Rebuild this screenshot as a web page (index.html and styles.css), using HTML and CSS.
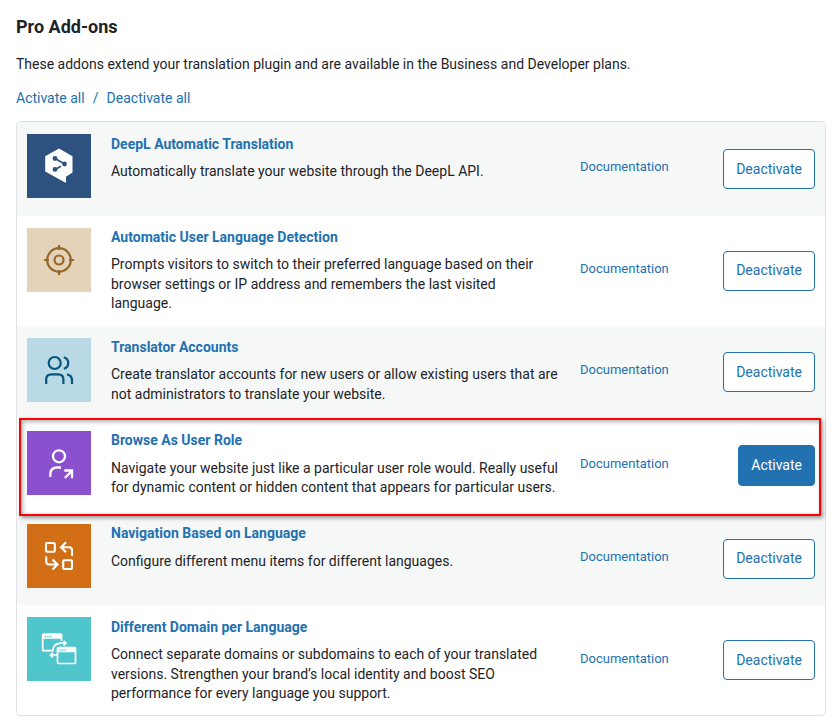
FILE: index.html
```html
<!DOCTYPE html>
<html lang="en">
<head>
<meta charset="utf-8">
<title>Pro Add-ons</title>
<link rel="stylesheet" href="styles.css">
</head>
<body>
<main class="page">
  <h2 class="heading">Pro Add-ons</h2>
  <p class="intro">These addons extend your translation plugin and are available in the Business and Developer plans.</p>
  <div class="bulk"><a>Activate all</a><span class="slash">/</span><a>Deactivate all</a></div>
  <section class="addons">
    <article class="row shaded">
      <svg class="icon deepl" viewBox="0 0 64 64"><path fill="#fff" d="M32 14.5 45.5 22.3V38.5L39 42.8V49L18.2 37.5V22.3Z"/><path d="M28 24.5 37.5 30M28 35.4 34 32.2" fill="none" stroke="#2d5280" stroke-width="1.7"/><g fill="#2d5280"><circle cx="28" cy="24.5" r="2.4"/><circle cx="37.5" cy="30" r="2.4"/><circle cx="28" cy="35.4" r="2.4"/></g></svg>
      <div class="info"><h3>DeepL Automatic Translation</h3><p>Automatically translate your website through the DeepL API.</p></div>
      <a class="doc">Documentation</a>
      <button class="btn">Deactivate</button>
    </article>
    <article class="row tall">
      <svg class="icon detect" viewBox="0 0 64 64"><g fill="none" stroke="#946728" stroke-width="2.2"><circle cx="32" cy="32" r="11.8"/><circle cx="32" cy="32" r="4.5"/><path d="M32 17v5M32 42v5M17 32h5M42 32h5"/></g></svg>
      <div class="info"><h3>Automatic User Language Detection</h3><p>Prompts visitors to switch to their preferred language based on their browser settings or IP address and remembers the last visited language.</p></div>
      <a class="doc">Documentation</a>
      <button class="btn">Deactivate</button>
    </article>
    <article class="row shaded">
      <svg class="icon accounts" viewBox="0 0 64 64"><g fill="none" stroke="#04567f" stroke-width="2.2"><circle cx="27.7" cy="25" r="6"/><path d="M19.2 46v-4.500q0-5.200 5.200-5.200h6.800q5.200 0 5.200 5.200V46M36.800 19.200a6 6 0 0 1 0 11.600M40 36.300q5 1 5 6V46"/></g></svg>
      <div class="info"><h3>Translator Accounts</h3><p>Create translator accounts for new users or allow existing users that are not administrators to translate your website.</p></div>
      <a class="doc">Documentation</a>
      <button class="btn">Deactivate</button>
    </article>
    <article class="row highlighted">
      <svg class="icon browse" viewBox="0 0 64 64"><g fill="none" stroke="#fff" stroke-width="2.3"><circle cx="32" cy="25.300" r="6"/><path d="M23.300 46v-2.500q0-7 7-7H34M37.800 47 45 39.800M37.300 39.500H45v7.700"/></g></svg>
      <div class="info"><h3>Browse As User Role</h3><p>Navigate your website just like a particular user role would. Really useful for dynamic content or hidden content that appears for particular users.</p></div>
      <a class="doc">Documentation</a>
      <button class="btn primary">Activate</button>
    </article>
    <article class="row shaded">
      <svg class="icon navigation" viewBox="0 0 64 64"><g fill="none" stroke="#fff" stroke-width="2.1"><rect x="19" y="19" width="8.800" height="8.800" rx="1"/><rect x="36.200" y="36.200" width="8.800" height="8.800" rx="1"/><path d="M39 18.300 34 23.300l5 5M34 23.300h8q3 0 3 3V32M19.200 32.500v5q0 3 3 3H30M25.500 35.500l5 5-5 5"/></g></svg>
      <div class="info"><h3>Navigation Based on Language</h3><p>Configure different menu items for different languages.</p></div>
      <a class="doc">Documentation</a>
      <button class="btn">Deactivate</button>
    </article>
    <article class="row tall">
      <svg class="icon domain" viewBox="0 0 64 64"><g fill="none" stroke="#fff" stroke-width="1.700"><path d="M34.500 24V18q0-1-1-1H16.700q-1 0-1 1v14.700q0 1 1 1H26q0-7.500 8.500-7.500H38M36.500 24l2.500 2.300-2.500 2.300M30 38H23.500M26 35.700 23.500 38l2.500 2.300"/><rect x="30.500" y="30.700" width="18" height="15.800" rx="1"/></g><path fill="#fff" d="M16 17h18v4.800H16zM31 31h17v4.300H31z"/><path stroke="#4fc5cc" stroke-width="1.200" stroke-dasharray="1.500 1" d="M17.500 19.600h6.500M32.500 33.200H39"/></svg>
      <div class="info"><h3>Different Domain per Language</h3><p>Connect separate domains or subdomains to each of your translated versions. Strengthen your brand’s local identity and boost SEO performance for every language you support.</p></div>
      <a class="doc">Documentation</a>
      <button class="btn">Deactivate</button>
    </article>
  </section>
</main>
</body>
</html>
```
FILE: styles.css
```css
* { box-sizing: border-box; }
body {
  margin: 0;
  background: #fff;
  color: #1d2327;
  font: 14px/19.6px Roboto, "Liberation Sans", sans-serif;
}
.page { padding: 16px 11px 0 16px; }
h2, h3, p { margin: 0; }
.heading { font-size: 18px; line-height: 22px; font-weight: 700; }
.intro { margin-top: 16px; line-height: 20px; }
.bulk { display: flex; gap: 8.1px; margin-top: 14px; line-height: 20px; color: #2271b1; }
.addons {
  margin-top: 13.4px;
  border: 1px solid #dfe1e2;
  border-radius: 5px;
  box-shadow: 0 1px 2px rgba(0, 0, 0, .05);
}
.row {
  position: relative;
  display: grid;
  grid-template-columns: 64px 449px 1fr auto;
  column-gap: 20px;
  align-items: center;
  height: 93.2px;
  padding: 0 10px;
}
.row:first-child { border-radius: 4px 4px 0 0; }
.tall { height: 110.05px; }
.shaded { background: #f6f8f7; }
.icon { width: 64px; height: 64px; align-self: start; margin-top: 12px; }
.deepl { background: #2d5280; }
.detect { background: #e4d3b9; }
.accounts { background: #b9d9e6; }
.browse { background: #8b50cd; }
.navigation { background: #d26e16; }
.domain { background: #4fc5cc; }
.info { align-self: start; padding-top: 11.35px; }
.info h3 { font-size: 14px; line-height: 20px; font-weight: 700; color: #2271b1; }
.info p { margin-top: 8.39px; }
.doc { margin-top: -4px; font-size: 13px; color: #2271b1; }
.tall .doc { margin-top: -3.6px; }
.btn {
  height: 40.2px;
  padding: .66px 12px 0;
  border: 1px solid #2271b1;
  border-radius: 4px;
  background: #fff;
  color: #2271b1;
  font: inherit;
}
.primary { background: #2271b1; color: #fff; }
.highlighted::before {
  content: "";
  position: absolute;
  z-index: 1;
  inset: -1px 4px -4px 2px;
  border: 2px solid #f00;
  box-shadow: 2px 2px 4px rgba(0, 0, 0, .4), inset 2px 2px 4px rgba(0, 0, 0, .3);
  pointer-events: none;
}
```
